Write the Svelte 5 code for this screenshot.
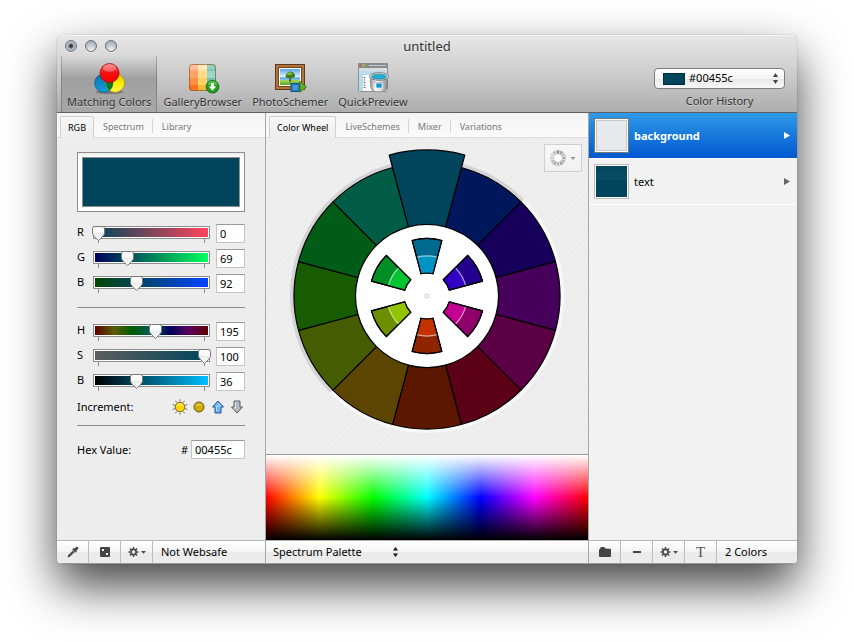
<script>
  const toolbar = ['Matching Colors', 'GalleryBrowser', 'PhotoSchemer', 'QuickPreview'];
  let activeTool = $state('Matching Colors');

  const rgb = $state([
    { id: 'r', label: 'R', value: 0, max: 255, stops: '#00455c, #ff455c' },
    { id: 'g', label: 'G', value: 69, max: 255, stops: '#00005c, #00455c 27%, #00ff5c' },
    { id: 'b', label: 'B', value: 92, max: 255, stops: '#004500, #00455c 36%, #0045ff' }
  ]);
  const hsb = $state([
    { id: 'h', label: 'H', value: 195, max: 360, stops: '#5c0000, #5c5c00, #005c00, #005c5c, #00005c, #5c005c, #5c0000' },
    { id: 's', label: 'S', value: 100, max: 100, stops: '#5c5c5c, #00455c' },
    { id: 'v', label: 'B', value: 36, max: 100, stops: '#000000, #00bfff' }
  ]);

  const wheel = ['#00455c', '#00175c', '#17005c', '#46005c', '#5c0045', '#5c0017', '#5c1700', '#5c4500', '#455c00', '#175c00', '#005c17', '#005c45'];
  const inner = [
    ['#006b8f', '#0093c4'],
    ['#24008f', '#3100c4'],
    ['#8f006b', '#c40093'],
    ['#8f2400', '#c43100'],
    ['#6b8f00', '#93c400'],
    ['#008f24', '#00c431']
  ];

  function point(radius, degrees) {
    const a = (degrees * Math.PI) / 180;
    return `${(radius * Math.sin(a)).toFixed(2)} ${(-radius * Math.cos(a)).toFixed(2)}`;
  }
  function wedge(r0, r1, mid) {
    const a = mid - 15;
    const b = mid + 15;
    return `M${point(r1, a)}A${r1} ${r1} 0 0 1 ${point(r1, b)}L${point(r0, b)}A${r0} ${r0} 0 0 0 ${point(r0, a)}Z`;
  }
  function arc(r, mid) {
    return `M${point(r, mid - 15)}A${r} ${r} 0 0 1 ${point(r, mid + 15)}`;
  }
</script>

{#snippet gear()}
  <svg width="18" height="12" viewBox="0 0 18 12" aria-hidden="true">
    <g stroke="#4a4a4a" stroke-width="1.5">
      {#each [0, 45, 90, 135] as a}
        <path d="M5.5 1V3M5.5 9V11" transform="rotate({a} 5.5 6)" />
      {/each}
    </g>
    <circle cx="5.5" cy="6" r="2.6" fill="none" stroke="#4a4a4a" stroke-width="1.7" />
    <path d="M13 5H18L15.5 7.800Z" fill="#4a4a4a" />
  </svg>
{/snippet}

{#snippet slider(row)}
  <div class="row">
    <label for={row.id}>{row.label}</label>
    <div class="track">
      <div class="fill" style="background-image: linear-gradient(90deg, {row.stops})"></div>
      <input type="range" id={row.id} min="0" max={row.max} bind:value={row.value} />
    </div>
    <input class="num" type="text" bind:value={row.value} aria-label="{row.label} value" />
  </div>
{/snippet}

<div class="desk">
  <main class="window">
    <header>
      <div class="title">
        <div class="lights">
          <button class="dirty" aria-label="Close"></button>
          <button aria-label="Minimize"></button>
          <button aria-label="Zoom"></button>
        </div>
        <h1>untitled</h1>
      </div>
      <div class="tools">
        <nav>
          {#each toolbar as name, i}
            <button class="tool" class:on={activeTool === name} onclick={() => (activeTool = name)}>
              <svg width="34" height="34" viewBox="0 0 34 34" aria-hidden="true">
                {#if i === 0}
                  <defs>
                    <linearGradient id="mr" x2="0" y2="1"><stop stop-color="#f66" /><stop offset=".5" stop-color="#f01010" /><stop offset="1" stop-color="#f00" /></linearGradient>
                    <linearGradient id="mb" x2="0" y2="1"><stop stop-color="#0b6fa8" /><stop offset="1" stop-color="#10a0dc" /></linearGradient>
                    <linearGradient id="my" x2="0" y2="1"><stop stop-color="#d8c800" /><stop offset=".5" stop-color="#ffee00" /><stop offset="1" stop-color="#fff650" /></linearGradient>
                  </defs>
                  <ellipse cx="17.5" cy="31" rx="14" ry="2" fill="#000" opacity=".25" />
                  <circle cx="12" cy="22" r="9.3" fill="url(#mb)" stroke="#075f90" stroke-width=".8" />
                  <circle cx="23.2" cy="22" r="9.3" fill="url(#my)" stroke="#a89c00" stroke-width=".8" />
                  <path d="M17.6 14.6A9.3 9.3 0 0 1 17.6 29.4A9.3 9.3 0 0 1 17.6 14.6Z" fill="#087a2c" />
                  <circle cx="17.6" cy="12" r="9.5" fill="url(#mr)" stroke="#a80808" stroke-width=".8" />
                  <ellipse cx="17.6" cy="7" rx="6.5" ry="3.8" fill="#fff" opacity=".28" />
                {:else if i === 1}
                  <clipPath id="gc"><rect x="3" y="3" width="27" height="27" rx="3" /></clipPath>
                  <g clip-path="url(#gc)">
                    {#each [['#ffb184', '#ffa36b', '#ff8f45', '#f7741c'], ['#ffe3a8', '#ffd98a', '#ffd064', '#f5b73c'], ['#7cc4b6', '#9bd6c8', '#73bfae', '#5aa99a']] as col, c}
                      {#each col as shade, r}
                        <rect x={3 + c * 9} y={3 + r * 7} width="9" height="7" fill={shade} />
                      {/each}
                    {/each}
                    <rect x="3" y="3" width="27" height="5" fill="#fff" opacity=".2" />
                  </g>
                  <rect x="3.5" y="3.5" width="26" height="26" rx="3" fill="none" stroke="#8c5a2c" stroke-opacity=".7" />
                  <circle cx="26.5" cy="25.7" r="6.3" fill="#1fa01f" stroke="#0c760c" />
                  <path d="M21.5 23.5a5.2 5.2 0 0 1 10 0q-5 2-10 0Z" fill="#6fd35a" opacity=".6" />
                  <path d="M25.1 22h2.8v3.4h2.3L26.5 29.7L22.8 25.4h2.3Z" fill="#fff" />
                {:else if i === 2}
                  <defs>
                    <linearGradient id="ps" x2="0" y2="1"><stop stop-color="#5aa6ea" /><stop offset=".5" stop-color="#e3f4fb" /><stop offset=".55" stop-color="#4f9fd0" /><stop offset=".68" stop-color="#8ccbe0" /><stop offset=".72" stop-color="#9ed65a" /><stop offset="1" stop-color="#58a820" /></linearGradient>
                  </defs>
                  <rect x="2.500" y="3.500" width="29" height="25" fill="#9a5c2b" stroke="#60371a" />
                  <rect x="4" y="5" width="26" height="22" fill="none" stroke="#c88c50" />
                  <rect x="5.500" y="6.500" width="23" height="19" fill="#fff" stroke="#70431f" />
                  <rect x="7" y="8" width="20" height="16" fill="url(#ps)" />
                  <path d="M16.600 16h1l.5 4.500h-2Z" fill="#5a4020" />
                  <path d="M12.500 16c0-3 2.500-5.500 5-5.500s5 3 4.500 5c-1.500 2-8 2-9.500 .5Z" fill="#3c7c1c" />
                  <path d="M14 13.500c1-2 2.500-2.500 4-2s1.500 1.500 .5 2-3.500 1-4.500 0Z" fill="#86bd3c" />
                  <rect x="18" y="22.500" width="8.500" height="8" fill="#2c7cc0" stroke="#164f86" />
                  <rect x="20" y="24.500" width="4.500" height="4" fill="#4b9de0" />
                  <path d="M27 22.500V20.500L33.500 26L27 31.200Z" fill="#5fae2c" stroke="#3d7c18" />
                {:else}
                  <defs>
                    <linearGradient id="qb"><stop stop-color="#8f8f8f" /><stop offset=".3" stop-color="#fafafa" /><stop offset=".65" stop-color="#d8d8d8" /><stop offset="1" stop-color="#777" /></linearGradient>
                  </defs>
                  <rect x="2.500" y="2.500" width="29" height="28" rx="1" fill="#f8fbfd" stroke="#8b9297" />
                  <rect x="2" y="2" width="30" height="5" rx="1" fill="#868c90" />
                  <circle cx="4.700" cy="4.500" r="1" fill="#e44" /><circle cx="7.200" cy="4.500" r="1" fill="#f5c33c" /><circle cx="9.700" cy="4.500" r="1" fill="#62b844" />
                  <path d="M13 4.500H30" stroke="#c4c8ca" />
                  <path d="M3 7H31V10H3Z" fill="#d8dcde" />
                  <path d="M3 10H31V14H7V30H3Z" fill="#b9dcea" />
                  <path d="M8.500 16v12" stroke="#555" stroke-width="1.500" stroke-dasharray="1 1.500" />
                  <path d="M14.500 16.500C14 22 14.500 27 16 29C19 31.500 27 31.500 30 29C31.500 27 32 22 31.500 16.500Z" fill="url(#qb)" stroke="#808080" stroke-width=".8" />
                  <ellipse cx="23" cy="15.500" rx="9.500" ry="3.800" fill="#eee" stroke="#7a7a7a" />
                  <ellipse cx="23" cy="15.700" rx="7.500" ry="2.500" fill="#1ab0d8" stroke="#397c90" stroke-width=".7" />
                  <path d="M14.500 18c1.500 5 15.500 5 17 0" fill="none" stroke="#aaa" stroke-width="1" />
                  <rect x="20" y="22" width="6" height="5" fill="#1299cc" stroke="#e8f6fb" stroke-width=".7" />
                {/if}
              </svg>
              <span>{name}</span>
            </button>
          {/each}
        </nav>
        <div class="history">
          <div class="popup">
            <i></i>
            <select id="history"><option>#00455c</option></select>
            <svg width="5" height="11" viewBox="0 0 5 11" aria-hidden="true"><path d="M0 4L2.500 0L5 4ZM0 7H5L2.500 11Z" fill="#444" /></svg>
          </div>
          <label for="history">Color History</label>
        </div>
      </div>
    </header>

    <div class="columns">
      <section class="left">
        <div class="tabs"><button class="on">RGB</button><button>Spectrum</button><button>Library</button></div>
        <div class="controls">
          <div class="well"><div></div></div>
          <div class="group">
            {#each rgb as row}{@render slider(row)}{/each}
          </div>
          <hr />
          <div class="group">
            {#each hsb as row}{@render slider(row)}{/each}
          </div>
          <div class="increment">
            <span>Increment:</span>
            <button aria-label="Brighter">
              <svg width="16" height="16" viewBox="0 0 16 16"><g stroke="#55503c" stroke-width=".8">{#each [0, 36, 72, 108, 144, 180, 216, 252, 288, 324] as a}<path d="M8 .3V2.300" transform="rotate({a} 8 8)" />{/each}</g><circle cx="8" cy="8" r="4.800" fill="#ffd500" stroke="#7a6a18" /><path d="M4.500 7a3.600 3.600 0 0 1 7 0Z" fill="#fff08a" opacity=".6" /></svg>
            </button>
            <button aria-label="Darker">
              <svg width="16" height="16" viewBox="0 0 16 16"><circle cx="8" cy="8" r="5" fill="#d0ac00" stroke="#62551c" /><path d="M4.500 7a3.600 3.600 0 0 1 7 0Z" fill="#e8d060" opacity=".6" /></svg>
            </button>
            <button aria-label="Increase">
              <svg width="16" height="16" viewBox="0 0 16 16"><path d="M8 2L13.500 8H11V14H5V8H2.500Z" fill="#6ab4ff" stroke="#23518c" stroke-linejoin="round" /><path d="M8 3.700L10.500 7H6.500V12" fill="none" stroke="#b8dcff" /></svg>
            </button>
            <button aria-label="Decrease">
              <svg width="16" height="16" viewBox="0 0 16 16"><path d="M8 14L13.500 8H11V2H5V8H2.500Z" fill="#b4bac2" stroke="#5c6066" stroke-linejoin="round" /><path d="M6.500 3V9H5" fill="none" stroke="#e0e4e8" /></svg>
            </button>
          </div>
          <hr />
          <div class="hex">
            <label for="hex">Hex Value:</label>
            <span>#</span>
            <input class="num" id="hex" type="text" value="00455c" />
          </div>
        </div>
        <footer>
          <button aria-label="Pick color">
            <svg width="12" height="12" viewBox="0 0 12 12"><path d="M7.300 2.800L9 .9C10 0 12 2 11.100 3L9.200 4.700L9.900 5.500L8.500 6.800L5.200 3.500L6.500 2.100Z" fill="#444" /><path d="M6 4.800L1.800 9L1 11L3 10.200L7.200 6" fill="#555" stroke="#444" /></svg>
          </button>
          <button aria-label="Random color">
            <svg width="12" height="12" viewBox="0 0 12 12"><rect x="1" y="1" width="10" height="10" rx="1" fill="#444" /><rect x="3" y="3" width="2" height="2" fill="#fff" /><rect x="7" y="7" width="2" height="2" fill="#fff" /></svg>
          </button>
          <button aria-label="Actions">{@render gear()}</button>
          <span>Not Websafe</span>
        </footer>
      </section>

      <section class="middle">
        <div class="tabs"><button class="on">Color Wheel</button><button>LiveSchemes</button><button>Mixer</button><button>Variations</button></div>
        <div class="stage">
          <svg class="wheel" width="280" height="290" viewBox="-140 -148 280 290" role="img" aria-label="Color wheel">
            <g stroke-width="4" fill="none">
              <path d="M-95.500 95.500A135 135 0 0 1 95.500 -95.500" stroke="#d4d4d4" />
              <path d="M95.500 -95.500A135 135 0 0 1 -95.500 95.500" stroke="#f8f8f8" />
            </g>
            <circle r="72" fill="#fff" />
            <g stroke="#000" stroke-width="1.200" stroke-linejoin="round">
              {#each wheel as color, i}
                {#if i > 0}<path d={wedge(71.5, 133, i * 30)} fill={color} />{/if}
              {/each}
              <path d={wedge(71.5, 146, 0)} fill={wheel[0]} />
              {#each inner as pair, i}
                <path d={wedge(23, 57.5, i * 60)} fill={pair[0]} />
                <path d={wedge(23, 40, i * 60)} fill={pair[1]} stroke="none" />
                <path d={arc(40, i * 60)} fill="none" stroke="#fff" stroke-opacity=".6" />
                <path d={wedge(23, 57.5, i * 60)} fill="none" />
              {/each}
            </g>
            <circle r="2" fill="#fff" stroke="#c4c4c4" />
          </svg>
          <button class="mode" aria-label="Wheel options">
            <svg width="26" height="18" viewBox="0 0 26 18">
              <g transform="translate(8 9)" stroke="#eee" stroke-width=".6">
                {#each ['#8c8c8c', '#a8a8a8', '#c0c0c0', '#aaa', '#b8b8b8', '#a4a4a4', '#b8b8b8', '#acacac', '#c0c0c0', '#ccc', '#d6d6d6', '#bcbcbc'] as shade, i}
                  <path d={wedge(3.6, 8, i * 30)} fill={shade} />
                {/each}
                <circle r="3.600" fill="#fff" />
              </g>
              <path d="M20.500 8H25.500L23 11Z" fill="#999" />
            </svg>
          </button>
        </div>
        <div class="spectrum"></div>
        <footer>
          <div class="palette">
            <select aria-label="Palette"><option>Spectrum Palette</option></select>
            <svg width="5" height="10" viewBox="0 0 5 10" aria-hidden="true"><path d="M0 3.500L2.500 0L5 3.500ZM0 6.500H5L2.500 10Z" fill="#111" /></svg>
          </div>
        </footer>
      </section>

      <section class="right">
        <ul>
          <li class="on">
            <div class="chip pale"></div>
            <span>background</span>
            <svg width="6" height="7" viewBox="0 0 6 7" aria-hidden="true"><path d="M0 0L6 3.500L0 7Z" fill="#fff" /></svg>
          </li>
          <li>
            <div class="chip"></div>
            <span>text</span>
            <svg width="6" height="7" viewBox="0 0 6 7" aria-hidden="true"><path d="M0 0L6 3.500L0 7Z" fill="#666" /></svg>
          </li>
        </ul>
        <footer>
          <button aria-label="New folder">
            <svg width="12" height="12" viewBox="0 0 12 12"><path d="M0 3.500Q0 3 1 3L1.500 1.500Q1.700 1 2.500 1H5Q6 1 6.200 2.500L11 2.700Q12 2.800 12 3.500V10Q12 11 11 11H1Q0 11 0 10Z" fill="#444" /></svg>
          </button>
          <button aria-label="Remove"><svg width="10" height="12" viewBox="0 0 10 12"><path d="M1 6H9" stroke="#444" stroke-width="2" /></svg></button>
          <button aria-label="Actions">{@render gear()}</button>
          <button class="type">T</button>
          <span>2 Colors</span>
        </footer>
      </section>
    </div>
  </main>
</div>

<style>
  :global(body) { background: #fff; }
  * { box-sizing: border-box; }
  button, select, input { font: inherit; color: inherit; margin: 0; }
  button { background: none; border: 0; padding: 0; }
  svg { display: block; flex: none; }
  .desk {
    min-height: 100vh;
    padding: 35px 57px 78px;
    display: flex;
    font-family: "Noto Sans", "Open Sans", sans-serif;
    font-size: 11px;
    line-height: 16px;
    color: #000;
    overflow: hidden;
  }
  .window {
    flex: 1;
    display: flex;
    flex-direction: column;
    border-radius: 5px;
    overflow: hidden;
    box-shadow: 0 0 1px rgba(0, 0, 0, 0.6), 0 22px 48px rgba(0, 0, 0, 0.74);
  }
  header {
    background: linear-gradient(#e6e6e6, #cfcfcf 45%, #adadad);
    border-top: 1px solid #f4f4f4;
    border-bottom: 1px solid #606060;
    color: #333;
    text-shadow: 0 1px 0 rgba(255, 255, 255, 0.4);
  }
  .title {
    display: grid;
    grid-template-columns: 1fr auto 1fr;
    align-items: center;
    height: 20px;
  }
  h1 { margin: 0; font-size: 13px; font-weight: 400; line-height: 20px; }
  .lights { display: flex; gap: 8px; padding-left: 8px; }
  .lights button {
    width: 12px;
    height: 12px;
    border-radius: 50%;
    border: 1px solid #6a7078;
    background: radial-gradient(circle at 50% 90%, #edf3f8, #a3acb5 85%);
    box-shadow: 0 1px 0 #eee;
  }
  .lights .dirty { background: radial-gradient(circle, #333 0 1px, #a9b2ba 3px, #c5ccd2); }
  .tools { display: flex; justify-content: space-between; height: 56px; }
  nav { display: flex; padding-left: 4px; }
  .tool {
    display: flex;
    flex-direction: column;
    align-items: center;
    padding: 5px 5px 0;
    text-shadow: inherit;
  }
  .tool:first-child { margin-right: 1px; }
  .tool.on {
    background: linear-gradient(rgba(0, 0, 0, 0), rgba(0, 0, 0, 0.2) 40%, rgba(0, 0, 0, 0.04));
    border: solid rgba(0, 0, 0, 0.2);
    border-width: 0 1px;
  }
  .tool span { line-height: 14px; }
  .history { display: flex; flex-direction: column; align-items: center; padding: 12px 12px 0 0; }
  .history label { margin-top: 4px; line-height: 16px; }
  .popup {
    width: 131px;
    height: 21px;
    border: 1px solid #7d7d7d;
    border-radius: 4px;
    background: linear-gradient(#fff, #f4f4f4 50%, #e8e8e8 51%, #f8f8f8);
    display: flex;
    align-items: center;
    padding: 0 6px 0 8px;
    color: #000;
  }
  .popup i { width: 22px; height: 12px; background: #00455c; border: 1px solid #00303f; flex: none; }
  select { appearance: none; background: none; border: 0; padding: 0; outline: 0; }
  .popup select { flex: 1; min-width: 0; padding: 0 0 2px 4px; }
  .columns { flex: 1; display: grid; grid-template-columns: 209px 1fr 208px; }
  section { display: flex; flex-direction: column; min-width: 0; background: #ededed; }
  .left, .middle { border-right: 1px solid #a6a6a6; }
  .tabs {
    display: flex;
    height: 25px;
    padding: 3px 3px 0;
    background: linear-gradient(#f4f4f4, #fbfbfb);
    border-bottom: 1px solid #dcdcdc;
    font-size: 9px;
    color: #777;
  }
  .tabs button { padding: 0 8px; height: 21px; position: relative; }
  .tabs button + button { padding: 0 9px; }
  .tabs button + button:not(:last-child)::after {
    content: "";
    position: absolute;
    right: 0;
    top: 3px;
    height: 14px;
    border-right: 1px solid #d4d4d4;
  }
  .tabs .on {
    height: 22px;
    padding: 0 7px;
    border: 1px solid #cfcfcf;
    border-bottom: 0;
    border-radius: 2px 2px 0 0;
    background: linear-gradient(#f8f8f8, #ededed);
    color: #000;
    line-height: 18px;
  }
  .controls { flex: 1; padding: 14px 20px 0; }
  .well { height: 60px; border: 1px solid #8e8e8e; padding: 4px; background: linear-gradient(#ececec, #fff 4px); }
  .well div { height: 100%; background: #00455c; border: 1px solid #8e8e8e; }
  .group { display: flex; flex-direction: column; gap: 6px; }
  .well + .group { margin-top: 12px; }
  .row { display: flex; align-items: flex-start; height: 19px; }
  .row label { width: 16px; }
  .track { flex: 1; min-width: 0; height: 13px; margin: 2px 6px 0 0; border: 1px solid #8e8e8e; padding: 1px; background: #fff; position: relative; }
  .track::after {
    content: "";
    position: absolute;
    left: 4px;
    right: 4px;
    top: 12px;
    height: 4px;
    border: solid #8e8e8e;
    border-width: 0 1px;
  }
  .fill { height: 100%; }
  .track input {
    appearance: none;
    position: absolute;
    z-index: 1;
    left: -2px;
    top: -2px;
    width: calc(100% + 4px);
    height: 16px;
    background: none;
    outline: 0;
  }
  .track input::-webkit-slider-thumb {
    appearance: none;
    width: 13px;
    height: 15px;
    background: url("data:image/svg+xml,%3Csvg xmlns='http://www.w3.org/2000/svg' width='13' height='15' viewBox='0 0 13 15'%3E%3Cdefs%3E%3ClinearGradient id='a' x2='0' y2='1'%3E%3Cstop stop-color='%23fff'/%3E%3Cstop offset='.4' stop-color='%23fafafa'/%3E%3Cstop offset='.5' stop-color='%23ebebeb'/%3E%3Cstop offset='1' stop-color='%23fff'/%3E%3C/linearGradient%3E%3C/defs%3E%3Cpath d='M2.500 .5H10.500Q12.500 .5 12.500 2.500V7.500Q12 9.500 6.500 14.400Q1 9.500 .5 7.500V2.500Q.5 .5 2.500 .5Z' fill='url(%23a)' stroke='%23777'/%3E%3C/svg%3E") no-repeat;
  }
  .num {
    width: 29px;
    height: 19px;
    border: 1px solid #c4c4c4;
    border-top-color: #9a9a9a;
    border-radius: 0;
    background: #fff;
    padding: 0 0 0 3px;
    outline: 0;
  }
  hr { border: 0; height: 1px; background: #8e8e8e; margin: 14px 0; }
  .increment { display: flex; gap: 3px; margin-top: 8px; }
  .increment span { flex: 1; }
  .increment + hr { margin-top: 10px; }
  .hex { display: flex; align-items: center; gap: 3px; }
  .hex label { flex: 1; }
  .hex .num { width: 54px; }
  footer {
    display: flex;
    align-items: center;
    height: 24px;
    border-top: 1px solid #b4b4b4;
    border-bottom: 1px solid #9a9a9a;
    background: linear-gradient(#fff, #f4f4f4 50%, #eaeaea 51%, #ececec);
  }
  footer button {
    width: 32px;
    height: 100%;
    display: flex;
    align-items: center;
    justify-content: center;
    border-right: 1px solid #bdbdbd;
  }
  footer span { padding-left: 8px; }
  .type { font: 15px "Liberation Serif", serif; color: #555; }
  .stage {
    flex: 1;
    position: relative;
    padding-top: 10px;
    display: flex;
    justify-content: center;
    align-items: flex-start;
    background: repeating-linear-gradient(135deg, #ececec 0 2px, #efefef 2px 4px);
  }
  .mode {
    position: absolute;
    top: 6px;
    right: 6px;
    width: 38px;
    height: 28px;
    border: 1px solid #cfcfcf;
    background: linear-gradient(#f8f8f8, #f0f0f0);
    display: grid;
    place-items: center;
  }
  .spectrum {
    height: 86px;
    border-top: 1px solid #999;
    background:
      linear-gradient(#fff, rgba(255, 255, 255, 0) 50%, rgba(0, 0, 0, 0) 50%, #000),
      linear-gradient(90deg, #f00, #ff0, #0f0, #0ff, #00f, #f0f, #f00);
  }
  .palette { display: flex; align-items: center; padding-left: 7px; }
  .palette select { width: 120px; }
  .right { background: #f2f2f2; }
  ul { flex: 1; margin: 0; padding: 0; list-style: none; }
  li {
    display: flex;
    align-items: center;
    gap: 5px;
    height: 46px;
    padding: 0 7px 0 5px;
    border-bottom: 1px solid #fff;
  }
  li.on {
    background: linear-gradient(#2f9be8, #0057d0);
    color: #fff;
    font-weight: 700;
  }
  li span { flex: 1; }
  .chip { width: 35px; height: 35px; border: 1px solid #bbb; padding: 1px; background: linear-gradient(#00455c, #0c4f65 14px, #00455c 14px) content-box, #fff; }
  .chip.pale { border-color: #777; padding: 2px; background: linear-gradient(#e6eaec, #e6eaec) content-box, #c4c8ca; box-shadow: inset 0 0 0 1px #fff; }
</style>
